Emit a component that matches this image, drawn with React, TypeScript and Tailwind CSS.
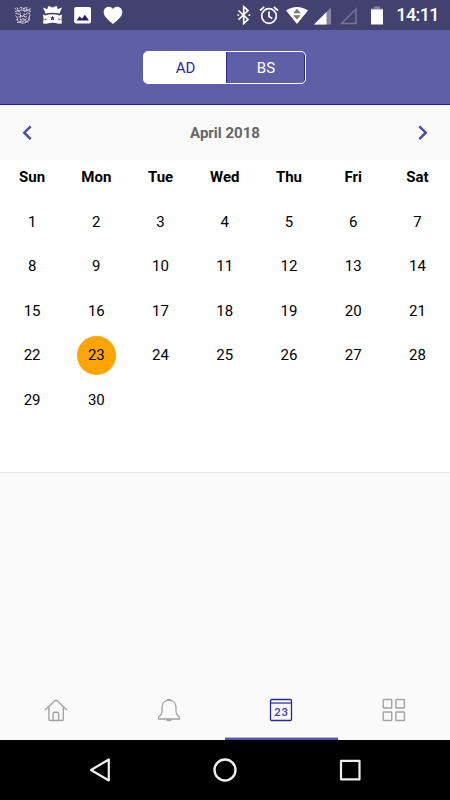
import { useState } from "react";
import clsx from "clsx";

const weekDays = ["Sun", "Mon", "Tue", "Wed", "Thu", "Fri", "Sat"];
const days = Array.from({ length: 30 }, (_, i) => i + 1);

function StatusBar() {
  return (
    <div className="flex h-[30px] shrink-0 items-center justify-between bg-[#434170] pr-[11px] pl-[13px] text-white">
      <div className="flex items-center">
        {/* Face notification */}
        <svg width="20" height="20" viewBox="0 0 20 20" fill="none" stroke="#d0cfe0" strokeWidth="1">
          <path d="M1.5 3l2 1.5M4 2.5l1 2M6.5 3.5l1.5-1.500 1 2M10 2.500l1 2 1.500-2.500M14 2l-.5 3M17.500 3l-2 2" />
          <path d="M2 6.500l3-.5 2.500 1.500M2.500 8.500h2l1.500 1 2-.5M11 6.500l3-1 4 1M10.500 9l2 .5 2-1.500 2.500.5M4 5l2.500.5 2-.5 3 .5 3-1M16 5.500l1.500-1" />
          <path d="M2.500 10.500l2 2.500v2l2.500 2.500 2 .5h2l3.500-1.500 1.500-3 1-4M5.500 11.500l2 1v-2.500l2 2 1-2 1.500 2.500 2-1.500M6.500 14l2 1 1-1.500 2.500 1.500 1.500-1.500" />
          <path d="M4 17.500l3-.5 1-1.500 2 1 1.500-1 4 1.500M15 12.500l1.500 1M3 15.500l1.500-1.500M15 14.500l2 .5" />
        </svg>
        {/* Crowned castle notification */}
        <svg className="ml-[9px]" width="21" height="20" viewBox="0 0 21 20" fill="white">
          <path d="M1 2.600l4.300 1.600L6 1.300h2.200l.8 1h3l.8-1H15l.7 2.900L20 2.600 17.500 8.600C13 7.300 8 7.300 3.500 8.600z" />
          <path d="M1 9.600l2.500.8C8 8.900 13 8.900 17.500 10.400l2.500-.8-.6 4.700.6 4.200-3.500.3c-4-1.500-8-1.500-12 0L1 18.500l.6-4.200z" />
          <path d="M10.500 10.800l.8 1.700h1.500l-1.200 1.100.5 1.700-1.600-.9-1.600.9.5-1.700-1.200-1.100h1.500z" fill="#22206b" />
          <path d="M2.500 14.600l2.200-.5M16.300 14.100l2.200.5" stroke="#434170" />
        </svg>
        {/* Picture */}
        <svg className="ml-[10px]" width="19" height="19" viewBox="0 0 19 19">
          <rect x="1.200" y="1" width="16.800" height="16.500" rx="1.800" fill="white" />
          <path d="M3.500 14.500l3.200-4.200 2.200 2.500 3-4 4.100 5.700z" fill="#22206b" />
        </svg>
        <svg className="ml-[11px]" width="20" height="20" viewBox="0 0 20 20" fill="white">
          <path d="M10 19C5.500 15 .7 11.600.7 7.200.7 4 3 1.700 5.700 1.700c1.700 0 3.300.8 4.300 2.200 1-1.400 2.600-2.200 4.300-2.200 2.700 0 5 2.300 5 5.500C19.300 11.600 14.500 15 10 19z" />
        </svg>
      </div>

      <div className="flex items-center">
        {/* Bluetooth */}
        <svg width="14" height="20" viewBox="0 0 14 20" fill="none" stroke="white" strokeWidth="1.700">
          <path d="M1.500 5.500l9.500 9-4.300 4V1.700l4.300 3.900-9.500 9" />
          <path d="M.5 9.300h1.600v1.600H.5zM11.600 9.300h1.600v1.600h-1.600z" fill="white" stroke="none" />
        </svg>
        {/* Alarm */}
        <svg className="ml-[8px]" width="20" height="20" viewBox="0 0 20 20" fill="none" stroke="white" strokeWidth="1.700">
          <circle cx="10" cy="11" r="7.300" />
          <path d="M10 6.500v5l3.300 2M1 5.500l4.200-3.600M19 5.500l-4.200-3.600" />
        </svg>
        {/* Wifi */}
        <svg className="ml-[6px]" width="24" height="18" viewBox="0 0 24 18">
          <path d="M1 4.500C7.500-.2 16.500-.2 23 4.500L12 18z" fill="white" />
          <path d="M8.200 7.200L12 2.800l3.800 4.400zM8.200 9.200h7.600L12 13.500z" fill="#77766f" />
        </svg>
        {/* Mobile signal */}
        <svg className="ml-[4px]" width="19" height="19" viewBox="0 0 19 19">
          <path d="M1 18.500L18 1.500v17z" fill="#8584a3" />
          <path d="M1 18.500L13.500 6v12.500z" fill="white" />
        </svg>
        <svg className="ml-[7px]" width="19" height="19" viewBox="0 0 19 19">
          <path d="M2.500 17.500L17 3v14.500z" fill="none" stroke="#77769a" strokeWidth="1.500" />
        </svg>
        {/* Battery */}
        <svg className="ml-[12px]" width="14" height="19" viewBox="0 0 14 19">
          <path d="M1 2.500h3V.5h6v2h3V5H1z" fill="#8584a3" />
          <path d="M1 3.500h12V18.500H1z" fill="white" />
        </svg>
        <span className="w-[55px] text-right text-[18px] leading-[32px] font-medium tracking-[-0.6px]">14:11</span>
      </div>
    </div>
  );
}

function HomeIcon() {
  return (
    <svg width="24" height="24" viewBox="0 0 24 24" fill="none" stroke="#a3a3a3" strokeWidth="1.400" strokeLinejoin="round" strokeLinecap="round">
      <path d="M1.200 11.800L12 1.800l10.800 10" />
      <path d="M4.900 8.700v12.600q0 1.200 1.200 1.200h12q1.200 0 1.200-1.200V8.700" />
      <path d="M9.100 22.300v-6.500q0-1.500 1.500-1.500h2.500q1.500 0 1.500 1.500v6.500" />
    </svg>
  );
}

function BellIcon() {
  return (
    <svg width="24" height="24" viewBox="0 0 24 24" fill="none" stroke="#a3a3a3" strokeWidth="1.300" strokeLinejoin="round">
      <path d="M1.700 21v-2.300l1.800-1.300C4.700 16.200 5 15 5 12.500V9.500C5 5 8 2.200 12 2.200s7 2.800 7 7.300v3c0 2.500.3 3.700 1.500 4.900l1.800 1.300V21z" />
      <path d="M10.200 2.200q1.800-1.700 3.600 0zM9.500 21.600q2.500 1.800 5 0z" fill="#a3a3a3" />
    </svg>
  );
}

function CalendarIcon() {
  return (
    <svg width="24" height="24" viewBox="0 0 24 24">
      <path d="M1.500 4h21v2h-21z" fill="#7d7cbb" />
      <rect x="1.500" y="1.500" width="21" height="21" rx="1.200" fill="none" stroke="#2b2999" strokeWidth="1.300" />
      <text x="12.400" y="17.600" textAnchor="middle" fontSize="11" fontWeight="700" letterSpacing=".7" fill="#4543a0" fontFamily="Lato, sans-serif">
        23
      </text>
    </svg>
  );
}

function GridIcon() {
  return (
    <svg width="24" height="24" viewBox="0 0 24 24" fill="none" stroke="#a3a3a3" strokeWidth="1.400">
      <rect x="1.200" y="1.500" width="8.500" height="8.500" rx=".6" />
      <rect x="13.900" y="1.500" width="8.500" height="8.500" rx=".6" />
      <rect x="1.200" y="14" width="8.500" height="8.500" rx=".6" />
      <rect x="13.900" y="14" width="8.500" height="8.500" rx=".6" />
    </svg>
  );
}

const tabs = [
  { id: "home", label: "Home", Icon: HomeIcon },
  { id: "alerts", label: "Notifications", Icon: BellIcon },
  { id: "calendar", label: "Calendar", Icon: CalendarIcon },
  { id: "more", label: "More", Icon: GridIcon },
];

export default function App() {
  const [era, setEra] = useState("AD");
  const [selected, setSelected] = useState(23);
  const [tab, setTab] = useState("calendar");

  return (
    <div className="flex h-[800px] w-[450px] flex-col overflow-hidden bg-[#fafafa] font-[Roboto,sans-serif] text-black">
      <StatusBar />

      {/* Calendar type switch */}
      <header className="flex h-[75px] shrink-0 justify-center border-b border-[#211f90] bg-[#5f5fa7] pt-[21px] pr-px">
        <div className="flex h-[33px] w-[163px] overflow-hidden rounded-[5px] border border-white bg-white">
          {["AD", "BS"].map((name) => (
            <button
              key={name}
              onClick={() => setEra(name)}
              className={clsx(
                "h-full pt-[2px] pl-px text-[15px]",
                name === "AD" ? "w-[82px]" : "w-[79px]",
                era === name ? "bg-white text-[#2b2999]" : "rounded-r-[4px] border-x border-[#2b2999] bg-[#5f5fa7] text-white"
              )}
            >
              {name}
            </button>
          ))}
        </div>
      </header>

      {/* Month navigation */}
      <div className="flex h-[55px] shrink-0 items-center justify-between px-[21px]">
        <button aria-label="Previous month">
          <svg width="12" height="16" viewBox="0 0 12 16" fill="none" stroke="#4b4aa8" strokeWidth="2.400">
            <path d="M9.700 1.300L3.200 7.700l6.500 6.400" />
          </svg>
        </button>
        <h1 className="pt-px text-[15px] font-bold text-[#666]">April 2018</h1>
        <button aria-label="Next month">
          <svg width="12" height="16" viewBox="0 0 12 16" fill="none" stroke="#4b4aa8" strokeWidth="2.400">
            <path d="M2.300 1.300L8.800 7.700l-6.500 6.400" />
          </svg>
        </button>
      </div>

      {/* Month grid */}
      <div className="h-[313px] shrink-0 border-b border-[#e6e6e6] bg-white pr-[0.500px]">
        <div className="grid h-[34px] grid-cols-7 items-center text-center text-[15px] font-bold">
          {weekDays.map((day) => (
            <span key={day}>{day}</span>
          ))}
        </div>
        <div className="grid auto-rows-[44.5px] grid-cols-7 place-items-center pt-[5.500px] text-[15px]">
          {days.map((day) => (
            <button
              key={day}
              onClick={() => setSelected(day)}
              className={clsx("size-[39px] rounded-full", day === selected && "bg-[#ffa500]")}
            >
              {day}
            </button>
          ))}
        </div>
      </div>

      {/* Bottom tabs */}
      <nav className="mt-auto grid h-[60px] shrink-0 grid-cols-4">
        {tabs.map(({ id, label, Icon }) => (
          <button
            key={id}
            aria-label={label}
            onClick={() => setTab(id)}
            className={clsx(
              "flex items-center justify-center border-b-2 pt-[2px]",
              tab === id ? "border-[#5553ab] shadow-[inset_0_-1px_0_#b9b8cf]" : "border-transparent"
            )}
          >
            <Icon />
          </button>
        ))}
      </nav>

      {/* System navigation */}
      <div className="flex h-[60px] shrink-0 items-center justify-between bg-black px-[88px]">
        <svg width="24" height="26" viewBox="0 0 24 26" fill="none" stroke="#eee" strokeWidth="2.200" strokeLinejoin="round">
          <path d="M3 13L20.800 2.500v21z" />
        </svg>
        <svg width="24" height="24" viewBox="0 0 24 24" fill="none" stroke="#eee" strokeWidth="2.400">
          <circle cx="12" cy="12" r="10.500" />
        </svg>
        <svg width="24" height="24" viewBox="0 0 24 24" fill="none" stroke="#eee" strokeWidth="2.200" strokeLinejoin="round">
          <rect x="3" y="2.800" width="18.500" height="18.500" />
        </svg>
      </div>
    </div>
  );
}
